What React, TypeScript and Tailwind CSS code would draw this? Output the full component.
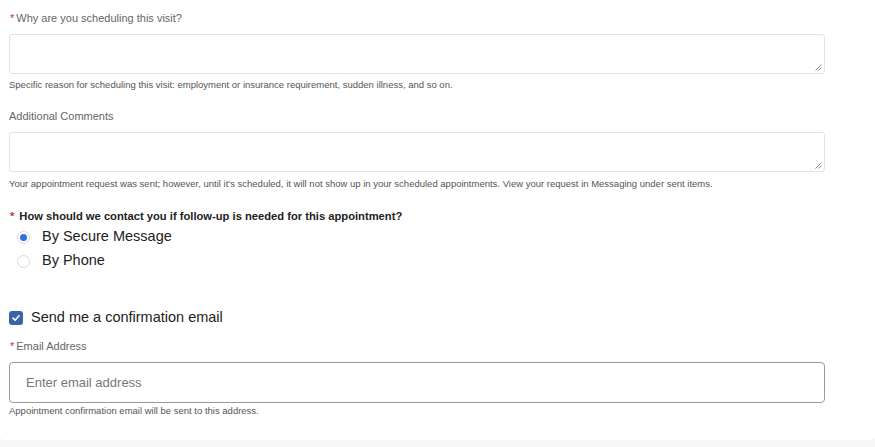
import { useState } from 'react';

const font = { fontFamily: '"Liberation Sans", Arial, sans-serif' };

function Req({ gap = 'mr-[2px]' }: { gap?: string }) {
  return <span className={`text-[#c0392b] ml-[1px] ${gap}`}>*</span>;
}

function Resize() {
  return (
    <svg className="absolute right-[2px] bottom-[2px]" width="7" height="7" viewBox="0 0 7 7">
      <path d="M6.5 0.5 L0.5 6.5 M6.5 3.5 L3.5 6.5" stroke="#888" strokeWidth="1" />
    </svg>
  );
}

function Radio({ checked, label, onClick }: { checked: boolean; label: string; onClick: () => void }) {
  return (
    <label className="flex items-center h-[24px] cursor-pointer" onClick={onClick}>
      <span className="ml-[8px] w-[13px] h-[13px] rounded-full border border-[#d8d8d8] bg-white flex items-center justify-center">
        {checked && <span className="w-[7px] h-[7px] rounded-full bg-[#2f6fe0]" />}
      </span>
      <span className="ml-[12px] text-[14.5px] text-[#222]">{label}</span>
    </label>
  );
}

export default function App() {
  const [contact, setContact] = useState<'msg' | 'phone'>('msg');
  const [confirm, setConfirm] = useState(true);

  return (
    <div className="w-[875px] h-[447px] bg-[#f5f6f5] overflow-hidden" style={font}>
      <div className="bg-white rounded-b-[4px] h-[440px] pl-[9px] pr-[50px] pt-[11px]">
        <p className="text-[11px] leading-[14px] text-[#666]">
          <Req />Why are you scheduling this visit?
        </p>
        <div className="relative mt-[9px] h-[40px] border border-[#e3e3e3] rounded-[3px]">
          <Resize />
        </div>
        <p className="mt-[5px] text-[9.5px] leading-[12px] text-[#555]">
          Specific reason for scheduling this visit: employment or insurance requirement, sudden illness, and so on.
        </p>

        <p className="mt-[18px] text-[11px] leading-[14px] text-[#666]">Additional Comments</p>
        <div className="relative mt-[9px] h-[40px] border border-[#e3e3e3] rounded-[3px]">
          <Resize />
        </div>
        <p className="mt-[6px] text-[9.5px] leading-[12px] text-[#555]">
          Your appointment request was sent; however, until it's scheduled, it will not show up in your scheduled appointments. View your request in Messaging under sent items.
        </p>

        <p className="mt-[19px] text-[11.2px] leading-[14px] font-bold text-[#222]">
          <Req gap="mr-[5px]" />How should we contact you if follow-up is needed for this appointment?
        </p>
        <div className="mt-[2px] flex flex-col">
          <Radio checked={contact === 'msg'} label="By Secure Message" onClick={() => setContact('msg')} />
          <Radio checked={contact === 'phone'} label="By Phone" onClick={() => setContact('phone')} />
        </div>

        <label className="mt-[37px] flex items-center h-[16px] cursor-pointer" onClick={() => setConfirm(!confirm)}>
          <span className={`w-[14px] h-[14px] rounded-[3px] flex items-center justify-center ${confirm ? 'bg-[#3a64a8]' : 'border border-[#999] bg-white'}`}>
            {confirm && (
              <svg width="10" height="10" viewBox="0 0 10 10">
                <path d="M2 5.2 L4.1 7.2 L8 2.8" stroke="#fff" strokeWidth="1.6" fill="none" strokeLinecap="round" strokeLinejoin="round" />
              </svg>
            )}
          </span>
          <span className="ml-[8px] text-[14.5px] text-[#222]">Send me a confirmation email</span>
        </label>

        <p className="mt-[13px] text-[11px] leading-[14px] text-[#666]">
          <Req />Email Address
        </p>
        <input
          type="email"
          placeholder="Enter email address"
          className="mt-[9px] w-full h-[41px] border border-[#9a9a9a] rounded-[4px] px-[16px] text-[13px] text-[#222] placeholder-[#777] outline-none"
        />
        <p className="mt-[2px] text-[9.5px] leading-[12px] text-[#555]">
          Appointment confirmation email will be sent to this address.
        </p>
      </div>
    </div>
  );
}
